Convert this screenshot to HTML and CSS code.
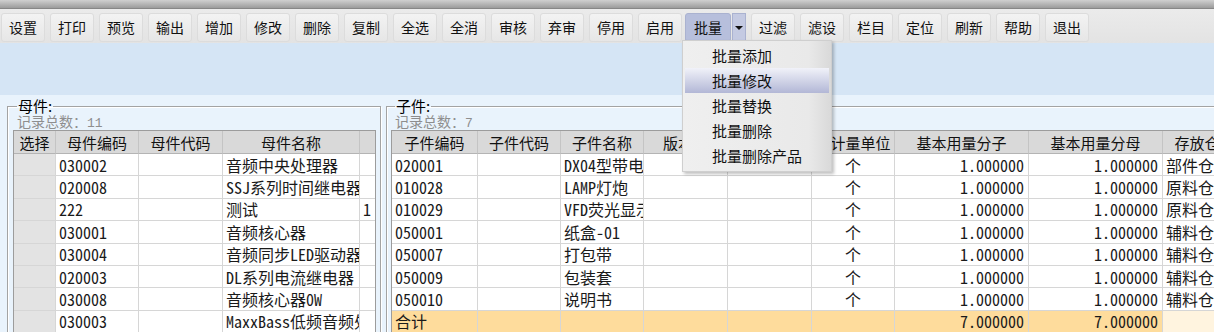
FILE: index.html
```html
<!DOCTYPE html>
<html lang="zh-CN">

<head>
  <meta charset="UTF-8">
  <meta name="viewport" content="width=device-width, initial-scale=1.0">
  <title>BOM</title>
  <link rel="stylesheet" href="styles.css">
</head>

<body>
  <div class="topbar"></div>

  <div class="toolbar">
    <button class="tbtn">设置</button>
    <button class="tbtn">打印</button>
    <button class="tbtn">预览</button>
    <button class="tbtn">输出</button>
    <button class="tbtn">增加</button>
    <button class="tbtn">修改</button>
    <button class="tbtn">删除</button>
    <button class="tbtn">复制</button>
    <button class="tbtn">全选</button>
    <button class="tbtn">全消</button>
    <button class="tbtn">审核</button>
    <button class="tbtn">弃审</button>
    <button class="tbtn">停用</button>
    <button class="tbtn">启用</button>
    <div class="split">
      <button class="tbtn tbtn-on">批量</button>
      <span class="drop"></span>
    </div>
    <button class="tbtn">过滤</button>
    <button class="tbtn">滤设</button>
    <button class="tbtn">栏目</button>
    <button class="tbtn">定位</button>
    <button class="tbtn">刷新</button>
    <button class="tbtn">帮助</button>
    <button class="tbtn">退出</button>
  </div>

  <div class="band"></div>

  <div class="main">
    <!-- 母件 -->
    <fieldset class="panel panel-left">
      <legend>母件:</legend>
      <div class="count">记录总数：<span class="num">11</span></div>
      <div class="grid-wrap wrap-left">
        <table class="grid grid-left">
          <colgroup>
            <col style="width:42px">
            <col style="width:83px">
            <col style="width:84px">
            <col style="width:137px">
            <col style="width:84px">
          </colgroup>
          <thead>
            <tr><th>选择</th><th>母件编码</th><th>母件代码</th><th>母件名称</th><th>版本号</th></tr>
          </thead>
          <tbody>
            <tr><td class="rh"></td><td>030002</td><td></td><td>音频中央处理器</td><td></td></tr>
            <tr><td class="rh"></td><td>020008</td><td></td><td>SSJ系列时间继电器</td><td></td></tr>
            <tr><td class="rh"></td><td>222</td><td></td><td>测试</td><td>1</td></tr>
            <tr><td class="rh"></td><td>030001</td><td></td><td>音频核心器</td><td></td></tr>
            <tr><td class="rh"></td><td>030004</td><td></td><td>音频同步LED驱动器</td><td></td></tr>
            <tr><td class="rh"></td><td>020003</td><td></td><td>DL系列电流继电器</td><td></td></tr>
            <tr><td class="rh"></td><td>030008</td><td></td><td>音频核心器0W</td><td></td></tr>
            <tr><td class="rh"></td><td>030003</td><td></td><td>MaxxBass低频音频处理器</td><td></td></tr>
            <tr><td class="rh"></td><td>030005</td><td></td><td>音频处理器</td><td></td></tr>
          </tbody>
        </table>
      </div>
    </fieldset>

    <!-- 子件 -->
    <fieldset class="panel panel-right">
      <legend>子件:</legend>
      <div class="count">记录总数：<span class="num">7</span></div>
      <div class="grid-wrap wrap-right">
        <table class="grid grid-right">
          <colgroup>
            <col style="width:86px">
            <col style="width:83px">
            <col style="width:83px">
            <col style="width:84px">
            <col style="width:84px">
            <col style="width:83px">
            <col style="width:134px">
            <col style="width:134px">
            <col style="width:84px">
          </colgroup>
          <thead>
            <tr><th>子件编码</th><th>子件代码</th><th>子件名称</th><th>版本号</th><th>规格型号</th><th>主计量单位</th><th>基本用量分子</th><th>基本用量分母</th><th>存放仓库</th></tr>
          </thead>
          <tbody>
            <tr><td>020001</td><td></td><td>DX04型带电指示器</td><td></td><td></td><td class="c">个</td><td class="r">1.000000</td><td class="r">1.000000</td><td>部件仓库</td></tr>
            <tr><td>010028</td><td></td><td>LAMP灯炮</td><td></td><td></td><td class="c">个</td><td class="r">1.000000</td><td class="r">1.000000</td><td>原料仓库</td></tr>
            <tr><td>010029</td><td></td><td>VFD荧光显示屏</td><td></td><td></td><td class="c">个</td><td class="r">1.000000</td><td class="r">1.000000</td><td>原料仓库</td></tr>
            <tr><td>050001</td><td></td><td>纸盒-01</td><td></td><td></td><td class="c">个</td><td class="r">1.000000</td><td class="r">1.000000</td><td>辅料仓库</td></tr>
            <tr><td>050007</td><td></td><td>打包带</td><td></td><td></td><td class="c">个</td><td class="r">1.000000</td><td class="r">1.000000</td><td>辅料仓库</td></tr>
            <tr><td>050009</td><td></td><td>包装套</td><td></td><td></td><td class="c">个</td><td class="r">1.000000</td><td class="r">1.000000</td><td>辅料仓库</td></tr>
            <tr><td>050010</td><td></td><td>说明书</td><td></td><td></td><td class="c">个</td><td class="r">1.000000</td><td class="r">1.000000</td><td>辅料仓库</td></tr>
            <tr class="sum"><td>合计</td><td></td><td></td><td></td><td></td><td></td><td class="r">7.000000</td><td class="r">7.000000</td><td class="sum-end"></td></tr>
          </tbody>
        </table>
      </div>
    </fieldset>
  </div>

  <!-- 批量 下拉菜单 -->
  <div class="menu">
    <div class="menu-item">批量添加</div>
    <div class="menu-item menu-item-on">批量修改</div>
    <div class="menu-item">批量替换</div>
    <div class="menu-item">批量删除</div>
    <div class="menu-item">批量删除产品</div>
  </div>
</body>

</html>
```

FILE: styles.css
```css
body {
  margin: 0;
  width: 1214px;
  height: 332px;
  overflow: hidden;
  position: relative;
  background: #e9f3fc;
  font-family: "Noto Sans CJK SC", sans-serif;
  color: #111;
}

/* 顶部灰条 */
.topbar {
  height: 8px;
  background: linear-gradient(#d0d0d0, #9c9c9c);
  border-bottom: 1px solid #878787;
}

/* 工具栏 */
.toolbar {
  height: 34px;
  box-sizing: border-box;
  padding: 4px 0 0 1px;
  display: flex;
  gap: 5px;
  background: linear-gradient(#ebebeb, #e3e3e3);
}

.tbtn {
  width: 44px;
  height: 29px;
  padding: 0;
  border: 1px solid #dcdcdc;
  border-radius: 3px;
  background: linear-gradient(#f3f3f3, #e6e6e6);
  font: 14px/27px "Noto Sans CJK SC", sans-serif;
  color: #111;
}

.split {
  display: flex;
  margin-left: -2px;
  gap: 1px;
}

.tbtn-on {
  width: 46px;
  background: #b7bfdc;
  border-color: #aab2d0;
}

.drop {
  width: 14px;
  height: 29px;
  box-sizing: border-box;
  border: 1px solid #aab2d0;
  background: #c4cae2;
  display: flex;
  align-items: center;
  justify-content: center;
}

.drop::after {
  content: "";
  border-left: 4px solid transparent;
  border-right: 4px solid transparent;
  border-top: 4px solid #111;
}

/* 浅蓝色横条 */
.band {
  height: 52px;
  background: #d5e5f5;
}

.main {
  height: 237px;
  box-sizing: border-box;
  padding: 3px 0 0 7px;
  display: flex;
  gap: 5px;
  align-items: flex-start;
  overflow: hidden;
}

.panel {
  margin: 0;
  min-width: 0;
  height: 300px;
  border: 1px solid #a3a3a3;
  box-shadow: inset 1px 1px 0 #fff, 1px 1px 0 #fff;
}

.panel legend {
  font-size: 15px;
  line-height: 16px;
  padding: 0 1px;
  margin-left: 4px;
  color: #000;
}

.panel-left {
  width: 374px;
  box-sizing: border-box;
  padding: 0 4px 0 5px;
  flex: none;
}

.panel-right {
  width: 900px;
  box-sizing: border-box;
  padding: 0 4px 0 4px;
  flex: none;
}

.count {
  height: 16px;
  padding-left: 4px;
  font-size: 14px;
  line-height: 14px;
  color: #8e8e8e;
}

.count .num {
  font-family: "Liberation Mono", monospace;
  font-size: 13px;
}

.grid-wrap {
  overflow: hidden;
  border-top: 1px solid #9c9c9c;
  border-left: 1px solid #9c9c9c;
  background: #fff;
}

.wrap-left {
  width: 363px;
  box-sizing: border-box;
  border-right: 1px solid #9c9c9c;
}

.wrap-right {
  width: 880px;
}

.grid {
  table-layout: fixed;
  border-collapse: separate;
  border-spacing: 0;
}

.grid-left {
  width: 430px;
}

.grid-right {
  width: 855px;
}

.grid th,
.grid td {
  box-sizing: border-box;
  padding: 0 3px;
  white-space: nowrap;
  overflow: hidden;
  border-right: 1px solid #d6d6d6;
  border-bottom: 1px solid #d6d6d6;
}

.grid th {
  height: 23px;
  background: #d9d9d9;
  border-right-color: #c4c4c4;
  border-bottom-color: #b4b4b4;
  font-weight: normal;
  font-size: 15px;
  color: #111;
  text-align: center;
}

.grid td {
  height: 22.4px;
  font-family: "Noto Sans Mono CJK SC", "Liberation Mono", "Noto Sans CJK SC", monospace;
  font-size: 16px;
  line-height: 20px;
  color: #1a1a1a;
}

.grid td.rh {
  background: #e3e3e3;
}

.grid td.c {
  text-align: center;
}

.grid td.r {
  text-align: right;
  padding-right: 4px;
}

.grid tr.sum td {
  background: #fedc9c;
}

.grid tr.sum td.sum-end {
  background: #fff4df;
}

/* 下拉菜单 */
.menu {
  position: absolute;
  left: 682px;
  top: 40px;
  width: 150px;
  box-sizing: border-box;
  padding: 2px 2px 3px;
  border: 1px solid #cfcfcf;
  background: linear-gradient(90deg, #efefef, #e9e9e9 85%, #d9d9d9);
  box-shadow: 2px 2px 3px rgba(0, 0, 0, 0.25);
}

.menu-item {
  height: 25px;
  line-height: 25px;
  padding-left: 27px;
  font-size: 15px;
  color: #111;
}

.menu-item-on {
  background: linear-gradient(#f1f2f9, #b2b7d6);
}
```
